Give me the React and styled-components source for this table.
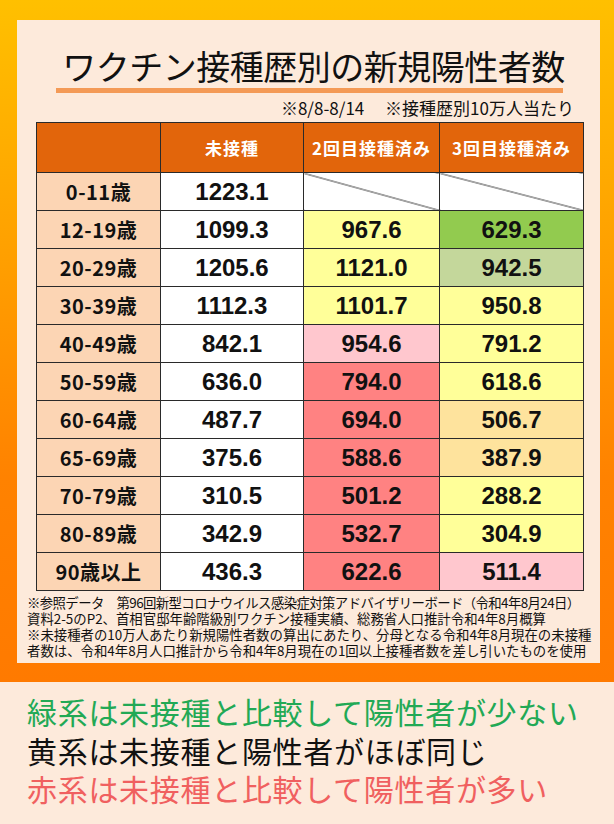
import React from 'react';
import styled, { createGlobalStyle } from 'styled-components';

const GlobalStyle = createGlobalStyle`
  html, body {
    margin: 0;
    padding: 0;
    background: #fdeadb;
  }
  body {
    font-family: "Noto Sans CJK JP", "Noto Sans", sans-serif;
    color: #111;
  }
`

const CELL_COLORS = {
  y: '#ffff99',
  g: '#92cb4f',
  gg: '#c4d79b',
  p: '#ffc7ce',
  r: '#ff8282',
  o: '#fee39d',
};

const rows = [
  ['0-11歳', '1223.1', null, null],
  ['12-19歳', '1099.3', ['967.6', 'y'], ['629.3', 'g']],
  ['20-29歳', '1205.6', ['1121.0', 'y'], ['942.5', 'gg']],
  ['30-39歳', '1112.3', ['1101.7', 'y'], ['950.8', 'y']],
  ['40-49歳', '842.1', ['954.6', 'p'], ['791.2', 'y']],
  ['50-59歳', '636.0', ['794.0', 'r'], ['618.6', 'y']],
  ['60-64歳', '487.7', ['694.0', 'r'], ['506.7', 'o']],
  ['65-69歳', '375.6', ['588.6', 'r'], ['387.9', 'o']],
  ['70-79歳', '310.5', ['501.2', 'r'], ['288.2', 'y']],
  ['80-89歳', '342.9', ['532.7', 'r'], ['304.9', 'y']],
  ['90歳以上', '436.3', ['622.6', 'r'], ['511.4', 'p']],
];

// [text, letter-spacing]
const notes = [
  ['※参照データ　第96回新型コロナウイルス感染症対策アドバイザリーボード（令和4年8月24日）', -0.6],
  ['資料2-5のP2、首相官邸年齢階級別ワクチン接種実績、総務省人口推計令和4年8月概算', 0],
  ['※未接種者の10万人あたり新規陽性者数の算出にあたり、分母となる令和4年8月現在の未接種', 0],
  ['者数は、令和4年8月人口推計から令和4年8月現在の1回以上接種者数を差し引いたものを使用', 0],
];

const App = () => {
  return (
    <>
      <GlobalStyle />
      <Frame>
        <Panel>
          <Title>ワクチン接種歴別の新規陽性者数</Title>
          <TitleRule />
          <Period>※8/8-8/14　 ※接種歴別10万人当たり</Period>
          <Table>
            <colgroup>
              <col style={{ width: 124 }} />
              <col style={{ width: 143 }} />
              <col style={{ width: 136 }} />
              <col style={{ width: 144 }} />
            </colgroup>
            <thead>
              <tr>
                <HeadCell />
                <HeadCell>未接種</HeadCell>
                <HeadCell>2回目接種済み</HeadCell>
                <HeadCell>3回目接種済み</HeadCell>
              </tr>
            </thead>
            <tbody>
              {rows.map(([age, none, second, third]) => (
                <tr key={age}>
                  <AgeCell>{age}</AgeCell>
                  <ValueCell>{none}</ValueCell>
                  {second
                    ? <ValueCell $bg={CELL_COLORS[second[1]]}>{second[0]}</ValueCell>
                    : <EmptyCell />}
                  {third
                    ? <ValueCell $bg={CELL_COLORS[third[1]]}>{third[0]}</ValueCell>
                    : <EmptyCell />}
                </tr>
              ))}
            </tbody>
          </Table>
          <Notes>
            {notes.map(([line, spacing]) => (
              <NoteLine key={line} $spacing={spacing}>{line}</NoteLine>
            ))}
          </Notes>
        </Panel>
      </Frame>
      <Legend>
        <LegendLine $color="#22a955">緑系は未接種と比較して陽性者が少ない</LegendLine>
        <LegendLine $color="#111">黄系は未接種と陽性者がほぼ同じ</LegendLine>
        <LegendLine $color="#f0605f">赤系は未接種と比較して陽性者が多い</LegendLine>
      </Legend>
    </>
  )
}

export default App;

const Frame = styled.div`
  width: 614px;
  box-sizing: border-box;
  padding: 20px 14px 19px 17px;
  background: linear-gradient(180deg, #ffc000 0%, #ff9f00 38%, #ff8200 70%, #ff7a00 100%);
`
const Panel = styled.div`
  height: 643px;
  box-sizing: border-box;
  background: #fdeadb;
  padding-top: 26px;
  display: flex;
  flex-direction: column;
`
const Title = styled.div`
  padding-left: 10px;
  font-size: 34px;
  line-height: 40px;
  font-weight: 400;
  text-align: center;
  letter-spacing: -0.5px;
  color: #111;
  white-space: nowrap;
`
const TitleRule = styled.div`
  width: 507px;
  height: 5px;
  margin: 2px 0 0 39px;
  background: #f49a56;
`
const Period = styled.div`
  margin: 5px 26px 4px 0;
  font-size: 17px;
  line-height: 20px;
  text-align: right;
  white-space: pre;
  color: #111;
`
const Table = styled.table`
  margin-left: 19px;
  width: 547px;
  table-layout: fixed;
  border-collapse: collapse;
  border: 1.5px solid #222;
  & td, & th {
    border: 1px solid #2a2a2a;
    padding: 0;
  }
`
const HeadCell = styled.th`
  height: 49px;
  background: #e2650b;
  color: #fff;
  font-size: 17px;
  font-weight: 700;
  letter-spacing: 1px;
  text-align: center;
  white-space: nowrap;
`
const AgeCell = styled.td`
  height: 37px;
  background: #fcd5b4;
  font-size: 20px;
  font-weight: 700;
  text-align: center;
  letter-spacing: 0.5px;
  white-space: nowrap;
`
const ValueCell = styled.td`
  background: ${({ $bg }) => $bg || '#fff'};
  font-family: "Liberation Sans", Arial, sans-serif;
  font-size: 24px;
  font-weight: 700;
  text-align: center;
  color: #111;
`
const EmptyCell = styled.td`
  background:
    linear-gradient(to top right, transparent calc(50% - 0.8px), #222 50%, transparent calc(50% + 0.8px)),
    #fff;
`
const Notes = styled.div`
  margin-top: 3px;
  padding-left: 10px;
  display: flex;
  flex-direction: column;
`
const NoteLine = styled.div`
  font-size: 13.4px;
  line-height: 16px;
  letter-spacing: ${({ $spacing }) => $spacing}px;
  white-space: nowrap;
  color: #111;
`
const Legend = styled.div`
  width: 614px;
  box-sizing: border-box;
  padding: 10px 0 0 27px;
  display: flex;
  flex-direction: column;
`
const LegendLine = styled.div`
  font-size: 30px;
  line-height: 38.5px;
  letter-spacing: 0.7px;
  color: ${({ $color }) => $color};
  white-space: nowrap;
`
